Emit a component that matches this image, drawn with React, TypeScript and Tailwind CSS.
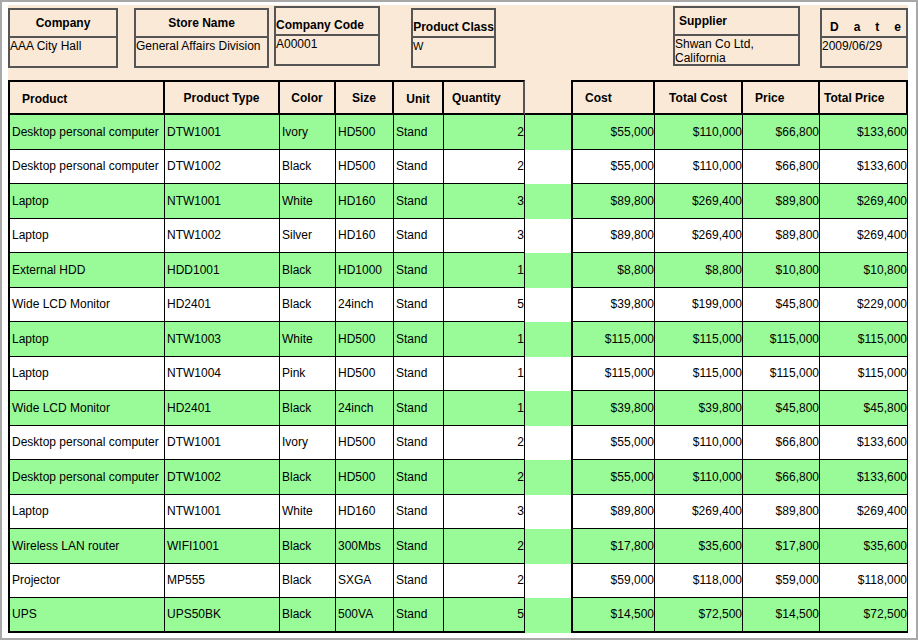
import React from "react";

const rows: string[][] = [
  ["Desktop personal computer", "DTW1001", "Ivory", "HD500", "Stand", "2", "$55,000", "$110,000", "$66,800", "$133,600"],
  ["Desktop personal computer", "DTW1002", "Black", "HD500", "Stand", "2", "$55,000", "$110,000", "$66,800", "$133,600"],
  ["Laptop", "NTW1001", "White", "HD160", "Stand", "3", "$89,800", "$269,400", "$89,800", "$269,400"],
  ["Laptop", "NTW1002", "Silver", "HD160", "Stand", "3", "$89,800", "$269,400", "$89,800", "$269,400"],
  ["External HDD", "HDD1001", "Black", "HD1000", "Stand", "1", "$8,800", "$8,800", "$10,800", "$10,800"],
  ["Wide LCD Monitor", "HD2401", "Black", "24inch", "Stand", "5", "$39,800", "$199,000", "$45,800", "$229,000"],
  ["Laptop", "NTW1003", "White", "HD500", "Stand", "1", "$115,000", "$115,000", "$115,000", "$115,000"],
  ["Laptop", "NTW1004", "Pink", "HD500", "Stand", "1", "$115,000", "$115,000", "$115,000", "$115,000"],
  ["Wide LCD Monitor", "HD2401", "Black", "24inch", "Stand", "1", "$39,800", "$39,800", "$45,800", "$45,800"],
  ["Desktop personal computer", "DTW1001", "Ivory", "HD500", "Stand", "2", "$55,000", "$110,000", "$66,800", "$133,600"],
  ["Desktop personal computer", "DTW1002", "Black", "HD500", "Stand", "2", "$55,000", "$110,000", "$66,800", "$133,600"],
  ["Laptop", "NTW1001", "White", "HD160", "Stand", "3", "$89,800", "$269,400", "$89,800", "$269,400"],
  ["Wireless LAN router", "WIFI1001", "Black", "300Mbs", "Stand", "2", "$17,800", "$35,600", "$17,800", "$35,600"],
  ["Projector", "MP555", "Black", "SXGA", "Stand", "2", "$59,000", "$118,000", "$59,000", "$118,000"],
  ["UPS", "UPS50BK", "Black", "500VA", "Stand", "5", "$14,500", "$72,500", "$14,500", "$72,500"],
];

const heads = ["Product", "Product Type", "Color", "Size", "Unit", "Quantity", "", "Cost", "Total Cost", "Price", "Total Price"];
const headAlign = ["pl-3 items-start pt-2", "justify-center", "justify-center", "justify-center", "justify-center items-start pt-2", "pl-2", "", "pl-3", "justify-center", "pl-3", "pl-1"];

const Box = ({ label, value, w, ml, mt, labelClass = "justify-center" }: any) => (
  <div className={`flex flex-col border-2 border-[#555] ${w} ${ml} ${mt}`}>
    <div className={`flex h-[28px] border-b-2 border-[#555] font-bold ${labelClass}`}>{label}</div>
    <div className="h-[28px] leading-[14px] pt-[1px]">{value}</div>
  </div>
);

export default function App() {
  return (
    <div className="w-[918px] h-[640px] border-2 border-[#a8a8a8] bg-white text-[12px] text-black" style={{ fontFamily: "'Liberation Sans', Arial, sans-serif" }}>
      <div className="ml-[6px] mt-[3px] w-[900px] bg-[#fae9d6]">
        <div className="flex h-[75px] items-start">
          <Box label={<span className="pt-1">Company</span>} value="AAA City Hall" w="w-[110px]" ml="ml-0" mt="mt-[3px]" />
          <Box label={<span className="pt-1">Store Name</span>} value="General Affairs Division" w="w-[135px]" ml="ml-[16px]" mt="mt-[3px]" />
          <Box label={<span className="pt-2">Company Code</span>} value="A00001" w="w-[106px]" ml="ml-[5px]" mt="mt-[1px]" labelClass="justify-start" />
          <Box label={<span className="pt-2">Product Class</span>} value={<span className="text-[11px]">W</span>} w="w-[85px]" ml="ml-[31px]" mt="mt-[3px]" />
          <Box label={<span className="pt-1 pl-1">Supplier</span>} value="Shwan Co  Ltd, California" w="w-[127px]" ml="ml-[177px]" mt="mt-[1px]" labelClass="justify-start" />
          <Box label={<span className="pt-2 pl-2 tracking-[15px]">Date</span>} value="2009/06/29" w="w-[88px]" ml="ml-[20px]" mt="mt-[3px]" labelClass="justify-start" />
        </div>
      </div>
      <div className="ml-[6px] grid w-[900px] grid-cols-[157px_115px_56px_58px_50px_81px_46px_84px_88px_77px_88px]">
        {heads.map((h, i) => (
          <div
            key={h + i}
            className={`flex h-[35px] items-center font-bold text-[12px] ${i === 6 ? "bg-[#fae9d6] border-b-2 border-black" : "bg-[#fae9d6] border-t-2 border-b-2 border-black"} ${i === 0 || i === 7 ? "border-l-2" : ""} ${i !== 5 && i !== 6 ? "border-r-2" : i === 5 ? "border-r-2 border-r-[#555]" : ""} ${headAlign[i]}`}
          >
            {h}
          </div>
        ))}
        {rows.map((r, ri) => {
          const bg = ri % 2 === 0 ? "bg-[#98fb98]" : "bg-white";
          const cells = [...r.slice(0, 6), "", ...r.slice(6)];
          return cells.map((c, ci) => (
            <div
              key={ri + "-" + ci}
              className={`flex h-[34.5px] items-center whitespace-nowrap overflow-hidden ${bg} ${ci === 6 ? "" : "border-b border-black"} ${ci === 0 || ci === 7 ? "border-l-2 border-black" : ""} ${ci === 6 ? "" : "border-r border-black"} ${ci >= 5 && ci !== 6 ? "justify-end" : "pl-[2px]"} ${ri === rows.length - 1 && ci !== 6 ? "border-b-2" : ""}`}
            >
              {c}
            </div>
          ));
        })}
      </div>
    </div>
  );
}
